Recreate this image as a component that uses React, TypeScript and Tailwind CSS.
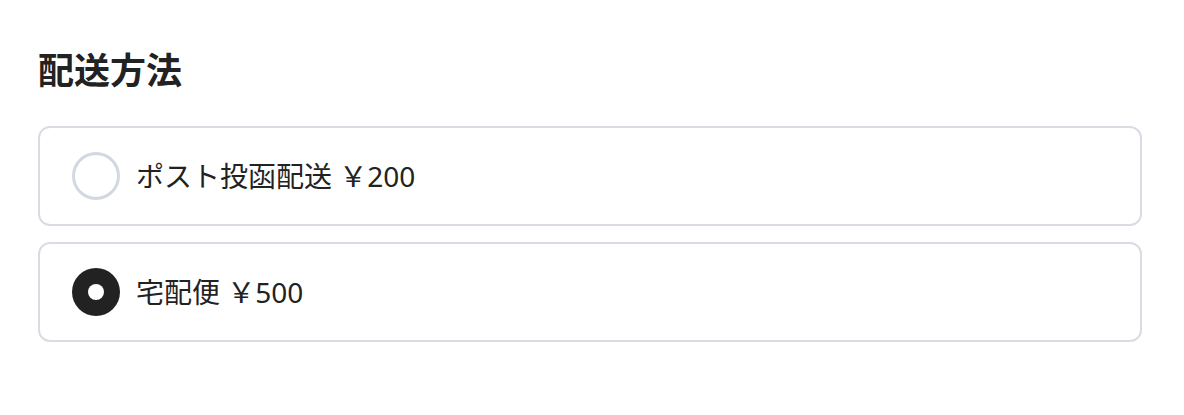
const OPTIONS = [
  { id: "post", label: "ポスト投函配送 ￥200" },
  { id: "takuhai", label: "宅配便 ￥500" },
];

export default function App() {
  const selected = "takuhai";
  return (
    <div
      className="min-h-screen bg-white pl-[38px] pr-[42px] pt-[42px] text-[#222]"
      style={{ fontFamily: "'Noto Sans CJK JP', 'Noto Sans', sans-serif" }}
    >
      <h2 className="text-[36px] font-bold leading-[52px]">配送方法</h2>
      <div className="mt-[32px] flex flex-col gap-[16px]">
        {OPTIONS.map((o) => {
          const on = o.id === selected;
          return (
            <label
              key={o.id}
              className="flex h-[100px] items-center gap-[16px] rounded-[12px] border-2 border-[#d9dce2] px-[32px]"
            >
              {on ? (
                <span className="flex h-[48px] w-[48px] items-center justify-center rounded-full bg-[#222]">
                  <span className="h-[16px] w-[16px] rounded-full bg-white" />
                </span>
              ) : (
                <span className="h-[48px] w-[48px] rounded-full border-[3px] border-[#d3d8e0]" />
              )}
              <span
                className="text-[28px] leading-none"
                style={{ fontFamily: "'Noto Sans', 'Noto Sans CJK JP', sans-serif" }}
              >
                {o.label}
              </span>
            </label>
          );
        })}
      </div>
    </div>
  );
}
